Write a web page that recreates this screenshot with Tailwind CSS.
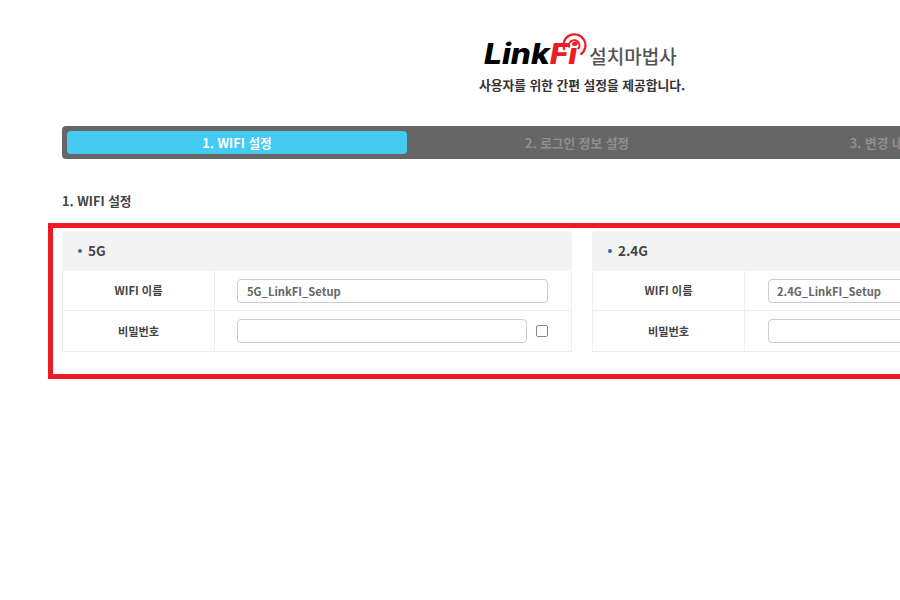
<!DOCTYPE html>
<html lang="ko">
<head>
<meta charset="utf-8">
<title>LinkFi 설치마법사</title>
<script src="https://cdn.jsdelivr.net/npm/@tailwindcss/browser@4"></script>
</head>
<body class="bg-white overflow-hidden font-['Noto_Sans_CJK_KR','Noto_Sans',sans-serif] text-[#444]">
<div class="w-[900px] h-[600px] overflow-hidden">
  <div class="w-[1040px] ml-[62px]">
    <!-- header -->
    <div class="h-[126px] pt-[33px] flex flex-col items-center">
      <div class="flex items-start h-[36px] pr-[3px]">
        <div class="relative h-[36px] w-[100px]">
          <span class="absolute left-0 top-[5px] origin-left scale-x-[1.13] italic font-extrabold text-[28px] leading-[32px] font-['Inter',sans-serif] text-black">Link<span class="text-[#ed1c24]">Fi</span></span>
          <svg class="absolute left-[77px] top-0" width="26" height="26" viewBox="0 0 26 26" fill="none" stroke="#ed1c24">
            <path d="M3.5 17 A11 11 0 1 1 19.5 21.5" stroke-width="2.2"/>
            <path d="M8.5 14.5 A5.2 5.2 0 1 1 17 16" stroke-width="2"/>
          </svg>
        </div>
        <span class="ml-[5px] mt-[9px] text-[19px] leading-[28px] font-medium text-[#555]">설치마법사</span>
      </div>
      <p class="mt-[6px] text-[12.75px] leading-[20px] font-bold text-[#333]">사용자를 위한 간편 설정을 제공합니다.</p>
    </div>

    <!-- steps -->
    <div class="flex h-[33px] p-[5px] rounded-[4px] bg-[#666] text-[12.7px] font-bold">
      <div class="w-[340px] shrink-0 flex items-center justify-center rounded-[4px] bg-[#45caf2] text-white">1. WIFI 설정</div>
      <div class="w-[340px] shrink-0 flex items-center justify-center text-[#8f8f8f]">2. 로그인 정보 설정</div>
      <div class="w-[340px] shrink-0 flex items-center justify-center text-[#8f8f8f]">3. 변경 내용 확인 및 적용</div>
    </div>

    <h2 class="mt-[32px] h-[20px] text-[12.7px] leading-[20px] font-bold text-[#444]">1. WIFI 설정</h2>

    <!-- wifi panels -->
    <div class="-ml-[14px] mt-[12px] w-[1070px] border-[5px] border-[#ed1c24] pl-[9px] pt-[3px] pb-[22px]">
      <div class="flex gap-[20px]">
        <section class="w-[510px]">
          <div class="flex items-center h-[40px] pl-[16px] rounded-t-[4px] bg-[#f3f3f3] text-[13.5px] font-bold">
            <span class="w-[4px] h-[4px] rounded-full bg-[#1f6fb5]"></span>
            <span class="ml-[6px] -mt-px">5G</span>
          </div>
          <div class="border-x border-b border-[#eee]">
            <div class="flex h-[40px] border-b border-[#eee]">
              <div class="w-[152px] shrink-0 flex items-center justify-center border-r border-[#eee] text-[11.2px] font-bold">WIFI 이름</div>
              <div class="flex items-center pl-[22px]">
                <input type="text" value="5G_LinkFI_Setup" class="w-[311px] h-[24px] px-[9px] rounded-[4px] border border-[#ccc] text-[11.2px] font-bold text-[#666]">
              </div>
            </div>
            <div class="flex h-[40px]">
              <div class="w-[152px] shrink-0 flex items-center justify-center border-r border-[#eee] text-[11.2px] font-bold">비밀번호</div>
              <div class="flex items-center pl-[22px]">
                <input type="password" class="w-[290px] h-[24px] px-[9px] rounded-[4px] border border-[#ccc]">
                <span class="ml-[9px] w-[12px] h-[12px] rounded-[2px] border border-[#888] bg-white"></span>
              </div>
            </div>
          </div>
        </section>
        <section class="w-[510px]">
          <div class="flex items-center h-[40px] pl-[16px] rounded-t-[4px] bg-[#f3f3f3] text-[13.5px] font-bold">
            <span class="w-[4px] h-[4px] rounded-full bg-[#1f6fb5]"></span>
            <span class="ml-[6px] -mt-px">2.4G</span>
          </div>
          <div class="border-x border-b border-[#eee]">
            <div class="flex h-[40px] border-b border-[#eee]">
              <div class="w-[152px] shrink-0 flex items-center justify-center border-r border-[#eee] text-[11.2px] font-bold">WIFI 이름</div>
              <div class="flex items-center pl-[23px]">
                <input type="text" value="2.4G_LinkFI_Setup" class="w-[311px] h-[24px] px-[8px] rounded-[4px] border border-[#ccc] text-[11.2px] font-bold text-[#666]">
              </div>
            </div>
            <div class="flex h-[40px]">
              <div class="w-[152px] shrink-0 flex items-center justify-center border-r border-[#eee] text-[11.2px] font-bold">비밀번호</div>
              <div class="flex items-center pl-[23px]">
                <input type="password" class="w-[290px] h-[24px] px-[9px] rounded-[4px] border border-[#ccc]">
                <span class="ml-[9px] w-[12px] h-[12px] rounded-[2px] border border-[#888] bg-white"></span>
              </div>
            </div>
          </div>
        </section>
      </div>
    </div>
  </div>
</div>
</body>
</html>
